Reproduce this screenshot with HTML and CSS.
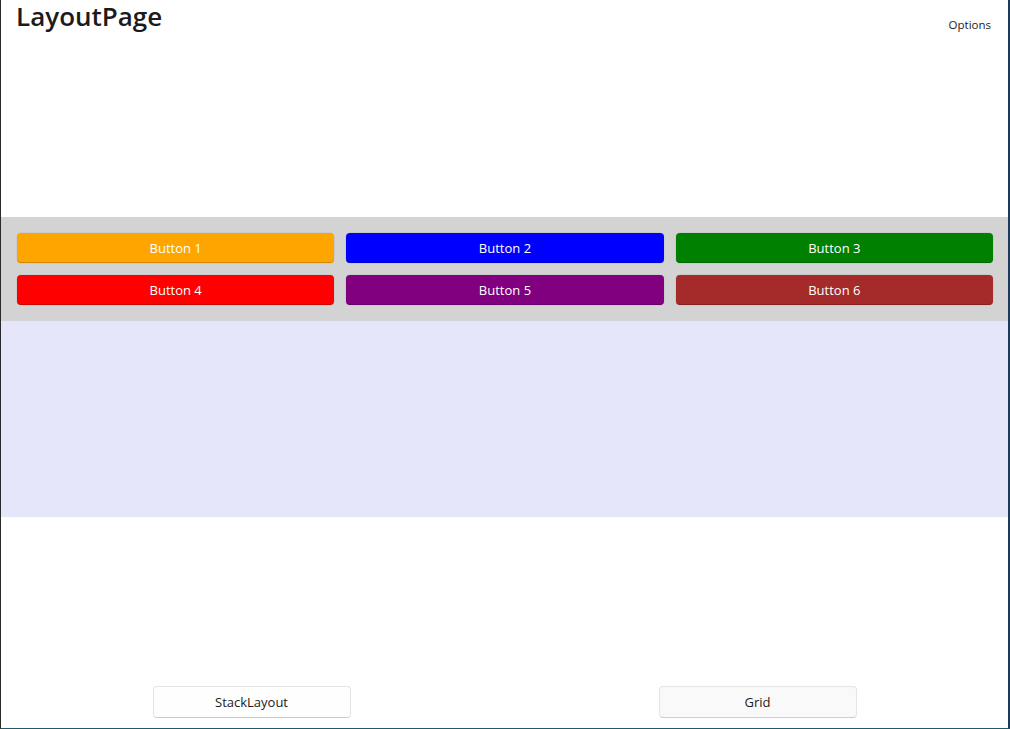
FILE: index.html
```html
<!DOCTYPE html>
<html>
<head>
<meta charset="utf-8">
<link rel="stylesheet" href="styles.css">
</head>
<body>
<div class="window">
  <header class="header">
    <h1 class="title">LayoutPage</h1>
    <span class="options">Options</span>
  </header>
  <section class="grayband">
    <button class="cbtn orange">Button 1</button>
    <button class="cbtn blue">Button 2</button>
    <button class="cbtn green">Button 3</button>
    <button class="cbtn red">Button 4</button>
    <button class="cbtn purple">Button 5</button>
    <button class="cbtn brown">Button 6</button>
  </section>
  <section class="lavender"></section>
  <div class="spacer"></div>
  <nav class="tabs">
    <button class="tab">StackLayout</button>
    <button class="tab alt">Grid</button>
  </nav>
</div>
</body>
</html>
```

FILE: styles.css
```css
* { box-sizing: border-box; }
html, body { margin: 0; padding: 0; }
body {
  width: 1010px;
  height: 729px;
  overflow: hidden;
  background: #ffffff;
  font-family: "Segoe UI", "Open Sans", "Noto Sans", sans-serif;
}
.window {
  width: 1010px;
  height: 729px;
  border-left: 1px solid #2a2a2a;
  border-right: 2px solid #1e3a5a;
  border-bottom: 1px solid #1c5a6e;
  display: flex;
  flex-direction: column;
  background: #fff;
}
.header {
  height: 217px;
  display: flex;
  justify-content: space-between;
  align-items: flex-start;
  padding: 0 17px 0 15px;
}
.title {
  margin: 0;
  font-size: 26px;
  font-weight: 600;
  color: #1b1b1b;
  line-height: 32px;
}
.options {
  margin-top: 16px;
  font-size: 11.5px;
  color: #1b1b1b;
  line-height: 18px;
}
.grayband {
  background: #d3d3d3;
  height: 104px;
  padding: 16px 15px 16px 16px;
  display: grid;
  grid-template-columns: 1fr 1fr 1fr;
  grid-auto-rows: 30px;
  column-gap: 12px;
  row-gap: 12px;
}
.cbtn {
  border: none;
  border-radius: 4px;
  color: #fff;
  font-family: inherit;
  font-size: 13px;
  padding: 0;
  box-shadow: inset 0 -1px 0 rgba(0,0,0,0.18), 0 0 0 0.5px rgba(0,0,0,0.08);
}
.orange { background: #ffa500; }
.blue { background: #0000ff; }
.green { background: #008000; }
.red { background: #ff0000; }
.purple { background: #800080; }
.brown { background: #a52a2a; }
.lavender {
  background: #e6e6fa;
  height: 196px;
}
.spacer { flex: 1; }
.tabs {
  display: grid;
  grid-template-columns: 1fr 1fr;
  column-gap: 5px;
  padding-bottom: 10px;
}
.tab {
  justify-self: center;
  width: 198px;
  height: 32px;
  border: 1px solid #e5e5e5;
  border-bottom-color: #cccccc;
  border-radius: 4px;
  background: #fefefe;
  color: #1b1b1b;
  font-family: inherit;
  font-size: 13px;
  padding: 0 0 1px 0;
}
.tab.alt { background: #f9f9f9; }
```
